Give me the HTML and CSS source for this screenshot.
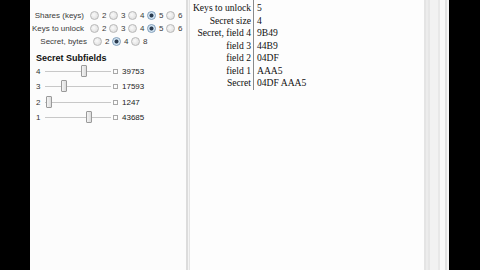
FILE: index.html
```html
<!DOCTYPE html>
<html>
<head>
<meta charset="utf-8">
<link rel="stylesheet" href="styles.css">
</head>
<body>
<div class="screen">
  <div class="black-left"></div>
  <div class="left-pane">
    <div class="form-row">
      <span class="flabel">Shares (keys)</span>
      <span class="opt"><i class="radio"></i>2</span>
      <span class="opt"><i class="radio"></i>3</span>
      <span class="opt"><i class="radio"></i>4</span>
      <span class="opt"><i class="radio on"></i>5</span>
      <span class="opt"><i class="radio"></i>6</span>
    </div>
    <div class="form-row">
      <span class="flabel">Keys to unlock</span>
      <span class="opt"><i class="radio"></i>2</span>
      <span class="opt"><i class="radio"></i>3</span>
      <span class="opt"><i class="radio"></i>4</span>
      <span class="opt"><i class="radio on"></i>5</span>
      <span class="opt"><i class="radio"></i>6</span>
    </div>
    <div class="form-row">
      <span class="flabel">Secret, bytes</span>
      <span class="opt"><i class="radio"></i>2</span>
      <span class="opt"><i class="radio on"></i>4</span>
      <span class="opt"><i class="radio"></i>8</span>
    </div>
    <div class="heading">Secret Subfields</div>
    <div class="slider-row">
      <span class="slabel">4</span>
      <span class="track"><i class="thumb" style="left:36px"></i></span>
      <i class="tick"></i>
      <span class="sval">39753</span>
    </div>
    <div class="slider-row">
      <span class="slabel">3</span>
      <span class="track"><i class="thumb" style="left:16px"></i></span>
      <i class="tick"></i>
      <span class="sval">17593</span>
    </div>
    <div class="slider-row">
      <span class="slabel">2</span>
      <span class="track"><i class="thumb" style="left:1px"></i></span>
      <i class="tick"></i>
      <span class="sval">1247</span>
    </div>
    <div class="slider-row">
      <span class="slabel">1</span>
      <span class="track"><i class="thumb" style="left:41px"></i></span>
      <i class="tick"></i>
      <span class="sval">43685</span>
    </div>
  </div>
  <div class="divider"></div>
  <div class="right-pane">
    <table class="result">
      <tr class="first"><td class="k">Keys to unlock</td><td class="v">5</td></tr>
      <tr><td class="k">Secret size</td><td class="v">4</td></tr>
      <tr><td class="k">Secret, field 4</td><td class="v">9B49</td></tr>
      <tr><td class="k">field 3</td><td class="v">44B9</td></tr>
      <tr><td class="k">field 2</td><td class="v">04DF</td></tr>
      <tr><td class="k">field 1</td><td class="v">AAA5</td></tr>
      <tr><td class="k">Secret</td><td class="v">04DF AAA5</td></tr>
    </table>
  </div>
  <div class="stripes"></div>
  <div class="black-right"></div>
</div>
</body>
</html>
```
FILE: styles.css
```css
html, body {
  margin: 0;
  padding: 0;
  background: #000;
}
.screen {
  display: flex;
  width: 480px;
  height: 270px;
  overflow: hidden;
}
.black-left {
  width: 30px;
  background: #000;
  flex: none;
}
.left-pane {
  width: 155px;
  flex: none;
  background: #fcfcfc;
  padding-top: 9px;
  box-sizing: border-box;
  font-family: "Liberation Sans", Arial, sans-serif;
  font-size: 8px;
  color: #333;
}
.form-row {
  display: flex;
  align-items: center;
  height: 13px;
}
.flabel {
  width: 57px;
  text-align: right;
  margin-right: 6px;
  white-space: nowrap;
  color: #3a3a3a;
}
.opt {
  display: flex;
  align-items: center;
  width: 19px;
  flex: none;
  color: #3a3a3a;
}
.radio {
  display: inline-block;
  width: 7px;
  height: 7px;
  border-radius: 50%;
  border: 1px solid #b8b8b8;
  background: radial-gradient(circle at 40% 40%, #fafafa, #d8d8d8);
  margin-right: 3px;
  box-sizing: content-box;
}
.radio.on {
  border-color: #7f9db9;
  background: radial-gradient(circle, #2b3b4e 0, #2b3b4e 1.6px, #cfe3f3 2.4px, #e8f2fa 100%);
}
.heading {
  font-weight: bold;
  font-size: 9px;
  color: #111;
  margin-top: 4px;
  padding-left: 6px;
  height: 12px;
  line-height: 12px;
}
.slider-row {
  display: flex;
  align-items: center;
  height: 15.3px;
  padding-left: 6px;
}
.slabel {
  width: 9px;
  flex: none;
  color: #333;
}
.track {
  position: relative;
  width: 66px;
  height: 11px;
  flex: none;
  background: linear-gradient(#0000 5px, #c8c8c8 5px, #c8c8c8 6px, #0000 6px);
}
.thumb {
  position: absolute;
  top: -1px;
  width: 4px;
  height: 10px;
  border: 1px solid #9a9a9a;
  border-radius: 1px;
  background: linear-gradient(90deg, #f4f4f4, #dcdcdc);
  box-sizing: content-box;
}
.tick {
  display: inline-block;
  width: 3px;
  height: 3px;
  border: 1px solid #a8a8a8;
  margin-left: 2px;
  margin-right: 4px;
  flex: none;
}
.sval {
  color: #222;
}
.divider {
  width: 5px;
  flex: none;
  background: linear-gradient(90deg, #fcfcfc 0, #fcfcfc 1px, #dcdcdc 1px, #dcdcdc 3px, #f4f4f4 3px, #f4f4f4 4px, #e4e4e4 4px);
}
.right-pane {
  width: 234px;
  flex: none;
  background: #fdfdfd;
  font-family: "Liberation Serif", "Times New Roman", serif;
  font-size: 9.6px;
  color: #111;
}
.result {
  border-collapse: collapse;
}
.result td {
  padding: 0;
  height: 12.5px;
  line-height: 12.5px;
  white-space: nowrap;
}
.result tr.first td {
  height: 13.5px;
  padding-top: 1px;
  line-height: 12.5px;
}
.result td.k {
  text-align: right;
  width: 59px;
  padding-left: 2px;
  padding-right: 2px;
}
.result td.v {
  border-left: 1px solid #8a8a8a;
  padding-left: 3px;
}
.stripes {
  width: 25px;
  flex: none;
  background: linear-gradient(90deg,
    #e4e4e4 0, #e4e4e4 2px,
    #ececec 2px, #ececec 4px,
    #e6e6e6 4px, #e6e6e6 6px,
    #f2f2f2 6px, #f2f2f2 14px,
    #e8e8e8 14px, #e8e8e8 16px,
    #fafafa 16px, #fafafa 21px,
    #e2e2e2 21px, #e2e2e2 23px,
    #f6f6f6 23px);
}
.black-right {
  flex: 1;
  background: #000;
}
```
